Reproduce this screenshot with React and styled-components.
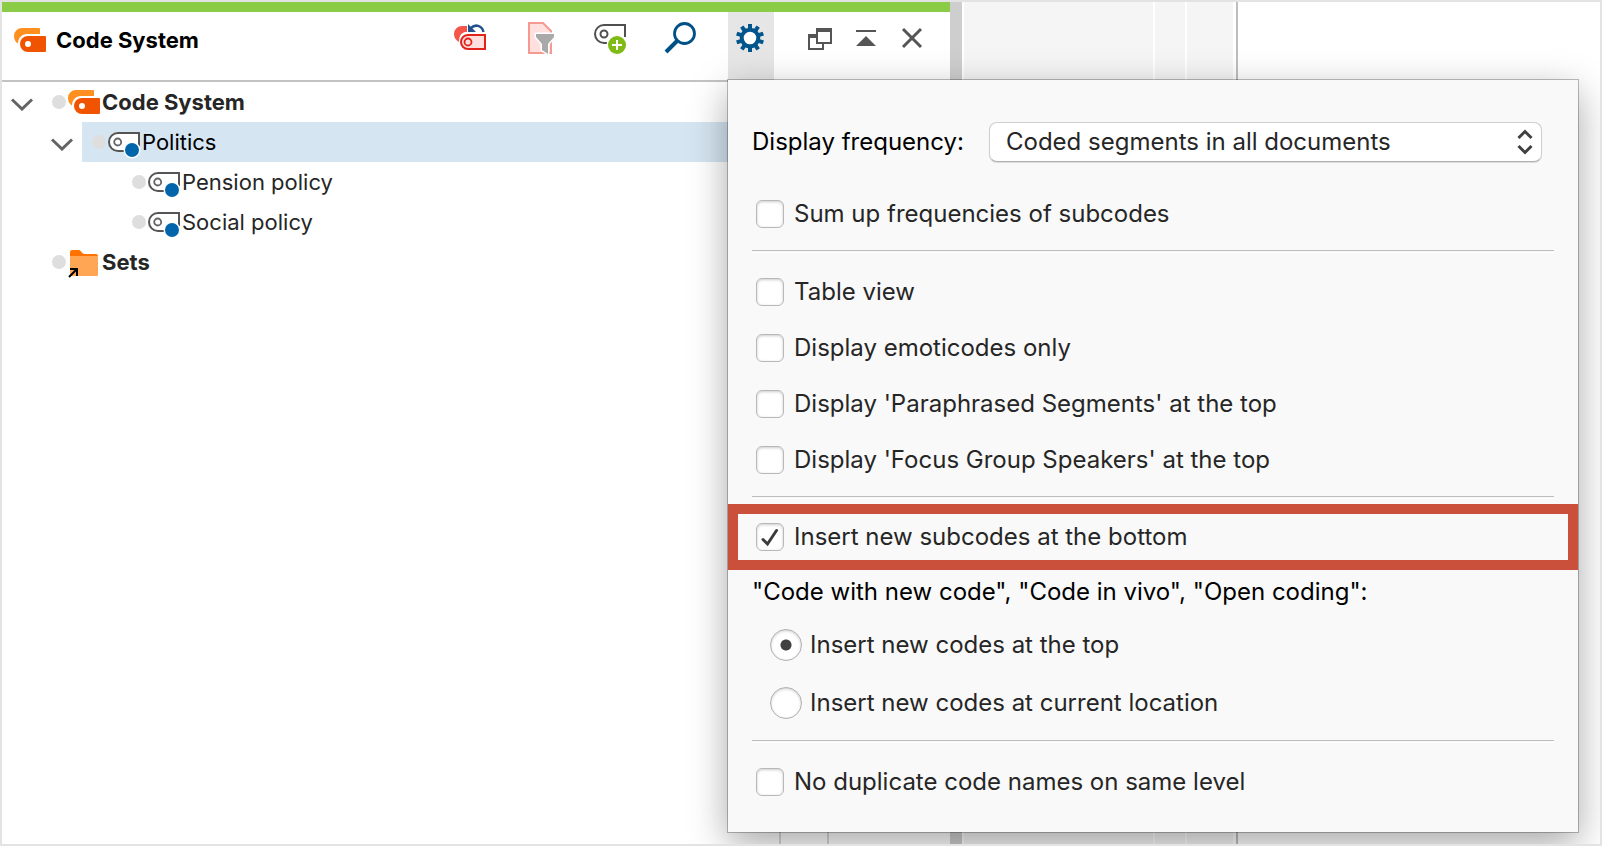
import { useState } from 'react';
import styled, { createGlobalStyle } from 'styled-components';

const FONT = "Inter, 'Liberation Sans', sans-serif";

const TREE = [
  { id: 'root', name: 'Code System', level: 0, icon: 'system', open: true, bold: true },
  { id: 'politics', name: 'Politics', level: 1, icon: 'code', open: true },
  { id: 'pension', name: 'Pension policy', level: 2, icon: 'code' },
  { id: 'social', name: 'Social policy', level: 2, icon: 'code' },
  { id: 'sets', name: 'Sets', level: 0, icon: 'folder', bold: true },
];

const VIEW_OPTIONS = [
  { id: 'table', label: 'Table view' },
  { id: 'emoticodes', label: 'Display emoticodes only' },
  { id: 'paraphrased', label: "Display 'Paraphrased Segments' at the top" },
  { id: 'focus', label: "Display 'Focus Group Speakers' at the top" },
];

export default function App() {
  const [selected, setSelected] = useState('politics');
  const [checked, setChecked] = useState({ bottom: true });
  const [position, setPosition] = useState('top');

  function toggle(id) {
    setChecked((prev) => ({ ...prev, [id]: !prev[id] }));
  }

  function renderOption(id, label) {
    return <CheckOption key={id} id={id} label={label} checked={!!checked[id]} onChange={() => toggle(id)} />;
  }

  return (
    <Window>
      <GlobalStyle />
      <CodePanel>
        <PanelHeader>
          <PanelTitle>
            <SystemIcon />
            Code System
          </PanelTitle>
          <Toolbar>
            <CodeTools>
              <ToolButton aria-label="Reset activated codes">
                <ResetIcon />
              </ToolButton>
              <ToolButton aria-label="Filter">
                <FilterIcon />
              </ToolButton>
              <ToolButton aria-label="New code">
                <NewCodeIcon />
              </ToolButton>
              <ToolButton aria-label="Search">
                <SearchIcon />
              </ToolButton>
              <SettingsAnchor>
                <ToolButton $active aria-label="Settings" aria-expanded="true">
                  <GearIcon />
                </ToolButton>
                <SettingsMenu>
                  <FrequencyRow>
                    <label htmlFor="frequency">Display frequency:</label>
                    <SelectBox>
                      <select id="frequency" defaultValue="all">
                        <option value="all">Coded segments in all documents</option>
                        <option value="activated">Coded segments in activated documents</option>
                        <option value="none">None</option>
                      </select>
                      <SelectArrows />
                    </SelectBox>
                  </FrequencyRow>
                  {renderOption('sum', 'Sum up frequencies of subcodes')}
                  <Divider />
                  {VIEW_OPTIONS.map((option) => renderOption(option.id, option.label))}
                  <Divider $tight />
                  <Highlight>{renderOption('bottom', 'Insert new subcodes at the bottom')}</Highlight>
                  <RadioGroup>
                    <legend>"Code with new code", "Code in vivo", "Open coding":</legend>
                    <RadioRow>
                      <input
                        id="pos-top"
                        type="radio"
                        name="position"
                        checked={position === 'top'}
                        onChange={() => setPosition('top')}
                      />
                      <label htmlFor="pos-top">Insert new codes at the top</label>
                    </RadioRow>
                    <RadioRow>
                      <input
                        id="pos-current"
                        type="radio"
                        name="position"
                        checked={position === 'current'}
                        onChange={() => setPosition('current')}
                      />
                      <label htmlFor="pos-current">Insert new codes at current location</label>
                    </RadioRow>
                  </RadioGroup>
                  <Divider />
                  {renderOption('duplicates', 'No duplicate code names on same level')}
                </SettingsMenu>
              </SettingsAnchor>
            </CodeTools>
            <WindowButtons>
              <ToolButton aria-label="Undock">
                <UndockIcon />
              </ToolButton>
              <ToolButton aria-label="Minimize">
                <MinimizeIcon />
              </ToolButton>
              <ToolButton aria-label="Close">
                <CloseIcon />
              </ToolButton>
            </WindowButtons>
          </Toolbar>
        </PanelHeader>
        <Tree role="tree" aria-label="Codes">
          {TREE.map((node) => (
            <TreeRow key={node.id} role="treeitem" aria-selected={selected === node.id} $level={node.level}>
              <ChevronSlot>
                {node.open && (
                  <ChevronButton aria-label={`Collapse ${node.name}`}>
                    <svg width="22" height="14" viewBox="0 0 22 14">
                      <path d="M1 2.500L11 12L21 2.500" fill="none" stroke="#646464" strokeWidth="3" />
                    </svg>
                  </ChevronButton>
                )}
              </ChevronSlot>
              <TreeItem $selected={selected === node.id} $bold={node.bold} onClick={() => setSelected(node.id)}>
                <Dot />
                {node.icon === 'system' && <SystemIcon />}
                {node.icon === 'code' && <CodeIcon />}
                {node.icon === 'folder' && <FolderIcon />}
                <span>{node.name}</span>
              </TreeItem>
            </TreeRow>
          ))}
        </Tree>
        <PanelFooter>
          <FooterCell $width={48} />
          <FooterCell $width={123} />
        </PanelFooter>
      </CodePanel>
      <Splitter />
      <DocumentPane>
        <DocumentGutter>
          <GutterColumn />
          <GutterColumn />
          <GutterColumn />
        </DocumentGutter>
      </DocumentPane>
    </Window>
  );
}

function CheckOption({ id, label, checked, onChange }) {
  return (
    <CheckRow>
      <CheckBox>
        <input id={id} type="checkbox" checked={checked} onChange={onChange} />
        {checked && (
          <svg width="28" height="28" viewBox="0 0 28 28">
            <path d="M7 16.500L11.500 21L20.500 7.500" fill="none" stroke="#3c3c3c" strokeWidth="3" strokeLinecap="round" />
          </svg>
        )}
      </CheckBox>
      <label htmlFor={id}>{label}</label>
    </CheckRow>
  );
}

function SystemIcon() {
  return (
    <Icon width="32" height="24" viewBox="0 0 32 24">
      <path d="M8 0H25a1 1 0 0 1 1 1V6H13C8 6 4 10 4 15.500C1.500 14 0 11.500 0 8A8 8 0 0 1 8 0Z" fill="#ff8f1f" />
      <path d="M14 8H31a1 1 0 0 1 1 1V23a1 1 0 0 1 -1 1H14A8 8 0 0 1 14 8Z" fill="#f05400" />
      <circle cx="14" cy="16" r="3" fill="#fff" />
    </Icon>
  );
}

function CodeIcon() {
  return (
    <Icon width="32" height="24" viewBox="0 -2 32 24">
      <path d="M31 14V1H10A9 9 0 0 0 10 19H17" fill="#fff" stroke="#555" strokeWidth="2" />
      <circle cx="9.700" cy="10" r="3.500" fill="none" stroke="#666" strokeWidth="1.800" />
      <circle cx="24" cy="18" r="8.500" fill="#fff" />
      <circle cx="24" cy="18" r="7" fill="#0065aa" />
    </Icon>
  );
}

function FolderIcon() {
  return (
    <Icon width="32" height="24" viewBox="0 0 32 24">
      <path d="M2 25V2a2 2 0 0 1 2-2H11C13 0 13.500 4 17 4H28a2 2 0 0 1 2 2V10H2Z" fill="#ff7200" />
      <path d="M2 6H30V25a1 1 0 0 1 -1 1H3a1 1 0 0 1 -1 -1Z" fill="#ffa654" />
      <path d="M1 27L9 19M2 19H9V26" fill="none" stroke="#000" strokeWidth="2" />
    </Icon>
  );
}

function ResetIcon() {
  return (
    <Icon width="32" height="32" viewBox="0 0 32 32">
      <path d="M7 4H12V10H10C6 11 4 14 4 20C1 18 -1 16 -1 12A8 8 0 0 1 7 4Z" fill="#f4544a" />
      <path d="M13 2L13 10H21Z" fill="#23518f" />
      <path d="M16 6C20 2 27 3 28.500 10" fill="none" stroke="#23518f" strokeWidth="2.500" />
      <path d="M13 13H30V27H13A7 7 0 0 1 13 13Z" fill="#ffdedd" stroke="#e2231a" strokeWidth="2" />
      <circle cx="13" cy="20" r="3.500" fill="none" stroke="#e2231a" strokeWidth="1.800" />
    </Icon>
  );
}

function FilterIcon() {
  return (
    <Icon width="32" height="32" viewBox="0 0 32 32">
      <path d="M4 1H18L26 9V31H4Z" fill="#ffe0de" stroke="#f59a90" strokeWidth="2" />
      <path
        d="M11 12H29V15L23 22V32L17 28V22L11 15Z"
        fill="#a9a9a9"
        stroke="#fff"
        strokeWidth="3"
        paintOrder="stroke"
      />
    </Icon>
  );
}

function NewCodeIcon() {
  return (
    <Icon width="32" height="32" viewBox="0 0 32 32">
      <path d="M30 15V3H9A9 9 0 0 0 9 21H12" fill="none" stroke="#505050" strokeWidth="2" />
      <circle cx="9" cy="12" r="3.500" fill="none" stroke="#505050" strokeWidth="2" />
      <circle cx="22" cy="23" r="10.500" fill="#fff" />
      <circle cx="22" cy="23" r="9" fill="#7fba15" />
      <path d="M17 23H27M22 18V28" stroke="#fff" strokeWidth="2" />
    </Icon>
  );
}

function SearchIcon() {
  return (
    <Icon width="32" height="32" viewBox="0 0 32 32">
      <circle cx="19.500" cy="11.500" r="10" fill="none" stroke="#005088" strokeWidth="2.800" />
      <path d="M13 18L1 30" stroke="#005088" strokeWidth="4" />
    </Icon>
  );
}

function GearIcon() {
  const teeth = Array.from({ length: 10 }, (_, i) => i * 36);
  return (
    <Icon width="32" height="32" viewBox="0 0 32 32">
      <circle cx="15" cy="16" r="8.300" fill="#fff" stroke="#00558c" strokeWidth="4" />
      {teeth.map((angle) => (
        <rect key={angle} x="13" y="2" width="4" height="5" fill="#00558c" transform={`rotate(${angle} 15 16)`} />
      ))}
    </Icon>
  );
}

function UndockIcon() {
  return (
    <Icon width="32" height="32" viewBox="0 0 32 32">
      <path d="M5 13H19V27H5Z" fill="#fff" stroke="#555" strokeWidth="2" />
      <path d="M4 14H12" stroke="#555" strokeWidth="4" />
      <path d="M13 7H27V21H13Z" fill="#fff" stroke="#555" strokeWidth="2" />
      <path d="M12 8H28" stroke="#555" strokeWidth="4" />
    </Icon>
  );
}

function MinimizeIcon() {
  return (
    <Icon width="32" height="32" viewBox="0 0 32 32">
      <path d="M6 8H26V10H6ZM16 14L26 24H6Z" fill="#555" />
    </Icon>
  );
}

function CloseIcon() {
  return (
    <Icon width="32" height="32" viewBox="0 0 32 32">
      <path d="M7 7L25 25M25 7L7 25" stroke="#555" strokeWidth="3" />
    </Icon>
  );
}

function SelectArrows() {
  return (
    <svg width="16" height="26" viewBox="0 0 16 26">
      <path d="M1.500 9L8 2.500L14.500 9M1.500 17L8 23.500L14.500 17" fill="none" stroke="#404040" strokeWidth="3" />
    </svg>
  );
}

const GlobalStyle = createGlobalStyle`
  * {
    box-sizing: border-box;
  }

  body {
    margin: 0;
    background-color: #fff;
    font-family: ${FONT};
  }

  button,
  input,
  select {
    margin: 0;
    font: inherit;
  }
`;

const Window = styled.main`
  display: grid;
  grid-template-columns: 948fr 12px 638fr;
  min-height: 100vh;
  border: 2px solid #e3e3e3;
  overflow: hidden;
`;

const CodePanel = styled.section`
  display: flex;
  flex-direction: column;
  min-width: 0;
  border-top: 10px solid #8bcc46;
`;

const PanelHeader = styled.header`
  display: flex;
  justify-content: space-between;
  height: 70px;
  padding-left: 12px;
  border-bottom: 2px solid #c3c3c3;
`;

const PanelTitle = styled.h1`
  display: flex;
  align-items: center;
  gap: 10px;
  height: 56px;
  margin: 0;
  color: #000;
  font-size: 22px;
  font-weight: 700;
  white-space: nowrap;
`;

const Toolbar = styled.div`
  display: flex;
  gap: 23px;
  padding-right: 15px;
`;

const CodeTools = styled.div`
  display: flex;
  gap: 24px;
`;

const ToolButton = styled.button`
  width: 46px;
  height: 68px;
  padding: 0 0 16px;
  display: flex;
  align-items: center;
  justify-content: center;
  border: none;
  background-color: ${({ $active }) => ($active ? '#e6e6e6' : 'transparent')};
`;

const WindowButtons = styled.div`
  display: flex;
`;

const Icon = styled.svg`
  flex: none;
  overflow: visible;
`;

const SettingsAnchor = styled.div`
  position: relative;
`;

const SettingsMenu = styled.div`
  position: absolute;
  top: 100%;
  left: 0;
  z-index: 1;
  width: 850px;
  padding: 42px 24px 22px;
  background-color: #f9f9f9;
  box-shadow:
    0 0 0 1px rgba(0, 0, 0, 0.25),
    0 12px 36px rgba(0, 0, 0, 0.35);
  color: #262626;
  font-size: 24px;
  line-height: 28px;
`;

const FrequencyRow = styled.div`
  display: flex;
  align-items: center;
  padding-right: 12px;
  margin-bottom: 24px;

  & > label {
    width: 237px;
    color: #000;
  }
`;

const SelectBox = styled.div`
  position: relative;
  flex: 1;

  & select {
    display: block;
    width: 100%;
    height: 40px;
    padding: 0 40px 0 16px;
    appearance: none;
    border: 1px solid #cfcfcf;
    border-bottom-color: #b0b0b0;
    border-radius: 8px;
    background-color: #fff;
    box-shadow: 0 1px 1px rgba(0, 0, 0, 0.12);
    color: #262626;
  }

  & svg {
    position: absolute;
    top: 7px;
    right: 9px;
    pointer-events: none;
  }
`;

const CheckRow = styled.div`
  display: flex;
  align-items: center;
  gap: 10px;
  height: 56px;
  padding-left: 4px;
`;

const CheckBox = styled.span`
  display: grid;

  & input,
  & svg {
    grid-area: 1 / 1;
  }

  & svg {
    pointer-events: none;
  }

  & input {
    width: 28px;
    height: 28px;
    appearance: none;
    border: 1px solid #b8b8b8;
    border-radius: 6px;
    background-color: #fff;
    box-shadow: inset 0 1px 3px rgba(0, 0, 0, 0.2);
  }
`;

const Divider = styled.hr`
  height: 1px;
  margin: ${({ $tight }) => ($tight ? '8px 0 7px' : '8px 0 13px')};
  border: none;
  background-color: #bdbdbd;
  box-shadow: 0 2px 0 #fff;
`;

const Highlight = styled.div`
  margin: 0 -24px;
  padding: 0 14px;
  border: 10px solid #cb503b;

  & ${CheckRow} {
    height: 46px;
  }
`;

const RadioGroup = styled.fieldset`
  margin: 0;
  padding: 0;
  border: none;

  & legend {
    padding: 8px 0 10px;
    color: #000;
  }
`;

const RadioRow = styled.div`
  display: flex;
  align-items: center;
  gap: 8px;
  height: 58px;
  padding-left: 18px;

  & input {
    width: 32px;
    height: 32px;
    appearance: none;
    border: 1px solid #b0b0b0;
    border-radius: 50%;
    background-color: #fff;
    box-shadow: inset 0 1px 3px rgba(0, 0, 0, 0.2);
  }

  & input:checked {
    background-image: radial-gradient(circle, #404040 5px, transparent 6px);
  }
`;

const Tree = styled.ul`
  flex: 1;
  margin: 0;
  padding: 0;
  list-style: none;
  font-size: 22px;
`;

const TreeRow = styled.li`
  display: flex;
  height: 40px;
  padding-left: ${({ $level }) => $level * 40}px;
`;

const ChevronSlot = styled.div`
  display: flex;
  align-items: center;
  justify-content: center;
  width: 40px;
`;

const ChevronButton = styled.button`
  display: flex;
  padding: 4px 0 0;
  border: none;
  background: none;
`;

const TreeItem = styled.div`
  flex: 1;
  display: flex;
  align-items: center;
  gap: 2px;
  padding-left: 10px;
  background-color: ${({ $selected }) => ($selected ? '#d5e5f1' : 'transparent')};
  color: ${({ $selected }) => ($selected ? '#000' : '#262626')};
  font-weight: ${({ $bold }) => ($bold ? 700 : 400)};
`;

const Dot = styled.span`
  width: 14px;
  height: 14px;
  border-radius: 50%;
  background-color: #dedede;
`;

const PanelFooter = styled.footer`
  display: flex;
  justify-content: flex-end;
  height: 24px;
`;

const FooterCell = styled.div`
  width: ${({ $width }) => $width}px;
  border-left: 2px solid #d8d8d8;
`;

const Splitter = styled.div`
  background-color: #cecece;
`;

const DocumentPane = styled.section`
  display: flex;
  background-color: #fff;
`;

const DocumentGutter = styled.div`
  display: grid;
  grid-template-columns: 189px 30px 46px;
  gap: 2px;
  padding: 0 3px 0 2px;
  border-right: 2px solid #bebebe;
`;

const GutterColumn = styled.div`
  background-color: #f5f5f5;
`;
